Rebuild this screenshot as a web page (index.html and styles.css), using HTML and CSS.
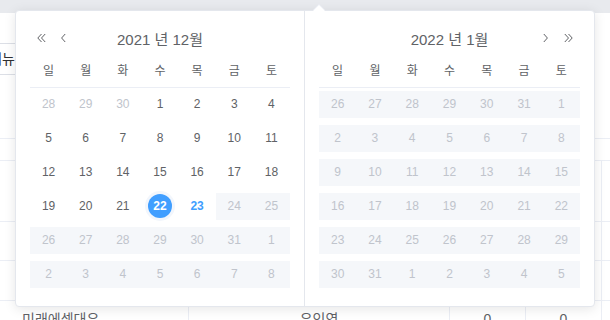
FILE: index.html
```html
<!DOCTYPE html>
<html lang="ko">
<head>
  <meta charset="UTF-8">
  <meta name="viewport" content="width=device-width, initial-scale=1.0">
  <title>기간 선택</title>
  <link rel="stylesheet" href="styles.css">
</head>
<body>
  <div class="screen">
    <div class="topbar"></div>

    <!-- table behind the popup -->
    <div class="board">
      <div class="row row-short r1"></div>
      <div class="row row-short r2"><span class="menu-label">메뉴</span></div>
      <div class="row r3"></div>
      <div class="row r4"></div>
      <div class="row cols r5"><div></div><div></div><div></div><div></div><div></div></div>
      <div class="row cols r6"><div></div><div></div><div></div><div></div><div></div></div>
      <div class="row cols r7"><div></div><div></div><div></div><div></div><div></div></div>
      <div class="row cols r8">
        <div class="cell-left">미래에셋대우</div>
        <div>유인영</div>
        <div>0</div>
        <div>0</div>
        <div></div>
      </div>
    </div>

    <!-- date range picker -->
    <div class="picker">
      <span class="picker-arrow"></span>

      <div class="month month-left">
        <div class="month-head">
          <div class="nav">
            <button class="nav-btn"><svg width="9" height="10" viewBox="0 0 9 10"><path d="M4.5 1 L0.8 5 L4.5 9 M8.2 1 L4.5 5 L8.2 9" fill="none" stroke="#606266" stroke-width="1"/></svg></button>
            <button class="nav-btn"><svg width="5" height="10" viewBox="0 0 5 10"><path d="M4.2 1 L0.6 5 L4.2 9" fill="none" stroke="#606266" stroke-width="1"/></svg></button>
          </div>
          <div class="month-title">2021 년 12월</div>
          <div class="nav"></div>
        </div>
        <div class="week-head">
          <span>일</span><span>월</span><span>화</span><span>수</span><span>목</span><span>금</span><span>토</span>
        </div>
        <div class="days">
          <div class="day off"><div><span>28</span></div></div>
          <div class="day off"><div><span>29</span></div></div>
          <div class="day off"><div><span>30</span></div></div>
          <div class="day"><div><span>1</span></div></div>
          <div class="day"><div><span>2</span></div></div>
          <div class="day"><div><span>3</span></div></div>
          <div class="day"><div><span>4</span></div></div>

          <div class="day"><div><span>5</span></div></div>
          <div class="day"><div><span>6</span></div></div>
          <div class="day"><div><span>7</span></div></div>
          <div class="day"><div><span>8</span></div></div>
          <div class="day"><div><span>9</span></div></div>
          <div class="day"><div><span>10</span></div></div>
          <div class="day"><div><span>11</span></div></div>

          <div class="day"><div><span>12</span></div></div>
          <div class="day"><div><span>13</span></div></div>
          <div class="day"><div><span>14</span></div></div>
          <div class="day"><div><span>15</span></div></div>
          <div class="day"><div><span>16</span></div></div>
          <div class="day"><div><span>17</span></div></div>
          <div class="day"><div><span>18</span></div></div>

          <div class="day"><div><span>19</span></div></div>
          <div class="day"><div><span>20</span></div></div>
          <div class="day"><div><span>21</span></div></div>
          <div class="day picked"><div><span>22</span></div></div>
          <div class="day today"><div><span>23</span></div></div>
          <div class="day disabled"><div><span>24</span></div></div>
          <div class="day disabled"><div><span>25</span></div></div>

          <div class="day disabled"><div><span>26</span></div></div>
          <div class="day disabled"><div><span>27</span></div></div>
          <div class="day disabled"><div><span>28</span></div></div>
          <div class="day disabled"><div><span>29</span></div></div>
          <div class="day disabled"><div><span>30</span></div></div>
          <div class="day disabled"><div><span>31</span></div></div>
          <div class="day disabled"><div><span>1</span></div></div>

          <div class="day disabled"><div><span>2</span></div></div>
          <div class="day disabled"><div><span>3</span></div></div>
          <div class="day disabled"><div><span>4</span></div></div>
          <div class="day disabled"><div><span>5</span></div></div>
          <div class="day disabled"><div><span>6</span></div></div>
          <div class="day disabled"><div><span>7</span></div></div>
          <div class="day disabled"><div><span>8</span></div></div>
        </div>
      </div>

      <div class="month month-right">
        <div class="month-head">
          <div class="nav"></div>
          <div class="month-title">2022 년 1월</div>
          <div class="nav nav-next">
            <button class="nav-btn"><svg width="5" height="10" viewBox="0 0 5 10"><path d="M0.8 1 L4.4 5 L0.8 9" fill="none" stroke="#606266" stroke-width="1"/></svg></button>
            <button class="nav-btn"><svg width="9" height="10" viewBox="0 0 9 10"><path d="M0.8 1 L4.5 5 L0.8 9 M4.5 1 L8.2 5 L4.5 9" fill="none" stroke="#606266" stroke-width="1"/></svg></button>
          </div>
        </div>
        <div class="week-head">
          <span>일</span><span>월</span><span>화</span><span>수</span><span>목</span><span>금</span><span>토</span>
        </div>
        <div class="days">
          <div class="day disabled"><div><span>26</span></div></div>
          <div class="day disabled"><div><span>27</span></div></div>
          <div class="day disabled"><div><span>28</span></div></div>
          <div class="day disabled"><div><span>29</span></div></div>
          <div class="day disabled"><div><span>30</span></div></div>
          <div class="day disabled"><div><span>31</span></div></div>
          <div class="day disabled"><div><span>1</span></div></div>

          <div class="day disabled"><div><span>2</span></div></div>
          <div class="day disabled"><div><span>3</span></div></div>
          <div class="day disabled"><div><span>4</span></div></div>
          <div class="day disabled"><div><span>5</span></div></div>
          <div class="day disabled"><div><span>6</span></div></div>
          <div class="day disabled"><div><span>7</span></div></div>
          <div class="day disabled"><div><span>8</span></div></div>

          <div class="day disabled"><div><span>9</span></div></div>
          <div class="day disabled"><div><span>10</span></div></div>
          <div class="day disabled"><div><span>11</span></div></div>
          <div class="day disabled"><div><span>12</span></div></div>
          <div class="day disabled"><div><span>13</span></div></div>
          <div class="day disabled"><div><span>14</span></div></div>
          <div class="day disabled"><div><span>15</span></div></div>

          <div class="day disabled"><div><span>16</span></div></div>
          <div class="day disabled"><div><span>17</span></div></div>
          <div class="day disabled"><div><span>18</span></div></div>
          <div class="day disabled"><div><span>19</span></div></div>
          <div class="day disabled"><div><span>20</span></div></div>
          <div class="day disabled"><div><span>21</span></div></div>
          <div class="day disabled"><div><span>22</span></div></div>

          <div class="day disabled"><div><span>23</span></div></div>
          <div class="day disabled"><div><span>24</span></div></div>
          <div class="day disabled"><div><span>25</span></div></div>
          <div class="day disabled"><div><span>26</span></div></div>
          <div class="day disabled"><div><span>27</span></div></div>
          <div class="day disabled"><div><span>28</span></div></div>
          <div class="day disabled"><div><span>29</span></div></div>

          <div class="day disabled"><div><span>30</span></div></div>
          <div class="day disabled"><div><span>31</span></div></div>
          <div class="day disabled"><div><span>1</span></div></div>
          <div class="day disabled"><div><span>2</span></div></div>
          <div class="day disabled"><div><span>3</span></div></div>
          <div class="day disabled"><div><span>4</span></div></div>
          <div class="day disabled"><div><span>5</span></div></div>
        </div>
      </div>
    </div>
  </div>
</body>
</html>
```

FILE: styles.css
```css
* {
  box-sizing: border-box;
}
body {
  margin: 0;
  font-family: "Liberation Sans", "Noto Sans CJK KR", sans-serif;
  color: #606266;
}
.screen {
  position: relative;
  width: 610px;
  height: 320px;
  overflow: hidden;
  background: #fff;
}
.topbar {
  height: 13px;
  background: #e8eaee;
}

/* table behind */
.row {
  border-bottom: 1px solid #ebeef5;
}
.row-short {
  width: 220px;
  border-bottom-color: #dcdfe6;
}
.r1 { height: 31px; }
.r2 { height: 31px; }
.r3 { height: 64px; }
.r4 { height: 22px; }
.r5 { height: 61px; }
.r6 { height: 39px; }
.r7 { height: 40px; }
.r8 { height: 20px; border-bottom: none; }
.menu-label {
  display: block;
  margin-left: -11px;
  font-size: 14px;
  line-height: 30px;
  color: #303133;
}
.cols {
  display: grid;
  grid-template-columns: 189px 261px 76px 76px 1fr;
}
.cols > div {
  border-right: 1px solid #ebeef5;
}
.cols > div:last-child {
  border-right: none;
}
.r8 > div {
  padding-top: 7px;
  font-size: 14px;
  line-height: 23px;
  text-align: center;
  white-space: nowrap;
}
.r8 > .cell-left {
  padding-left: 22px;
  text-align: left;
}

/* picker */
.picker {
  position: absolute;
  left: 15px;
  top: 10px;
  width: 580px;
  height: 297px;
  display: flex;
  background: #fff;
  border: 1px solid #e4e7ed;
  border-radius: 4px;
  box-shadow: 0 2px 12px 0 rgba(0, 0, 0, 0.1);
}
.picker-arrow {
  position: absolute;
  top: -6px;
  left: 297px;
  width: 0;
  height: 0;
  border: 6px solid transparent;
  border-top-width: 0;
  border-bottom-color: #fff;
  filter: drop-shadow(0 -1px 0 #ebeef5);
}
.month {
  width: 50%;
  padding: 14px 14px 0;
}
.month-left {
  border-right: 1px solid #e4e7ed;
}
.month-head {
  display: grid;
  grid-template-columns: 1fr auto 1fr;
  align-items: center;
  height: 26px;
}
.month-title {
  font-size: 15px;
  color: #606266;
}
.nav {
  display: flex;
  align-items: center;
  gap: 15px;
  padding: 0 7px;
}
.nav-next {
  justify-content: flex-end;
  gap: 16px;
}
.nav-btn {
  display: flex;
  padding: 0;
  border: none;
  background: none;
  cursor: pointer;
}
.week-head {
  display: grid;
  grid-template-columns: repeat(7, 1fr);
  align-items: center;
  height: 37px;
  border-bottom: 1px solid #ebeef5;
  font-size: 12px;
  text-align: center;
}
.days {
  display: grid;
  grid-template-columns: repeat(7, 1fr);
  grid-auto-rows: 34px;
}
.day {
  padding-top: 3px;
  font-size: 12px;
  text-align: center;
}
.day > div {
  height: 27px;
  padding-top: 1px;
}
.day span {
  display: inline-block;
  width: 24px;
  height: 24px;
  line-height: 24px;
  border-radius: 50%;
}
.day.off {
  color: #c0c4cc;
}
.day.disabled > div {
  background: #f5f7fa;
  color: #c0c4cc;
}
.day.today span {
  color: #409eff;
  font-weight: 700;
}
.day.picked span {
  background: #409eff;
  color: #fff;
  font-weight: 700;
  box-shadow: 0 0 0 3px #f2f6fc;
}
```
